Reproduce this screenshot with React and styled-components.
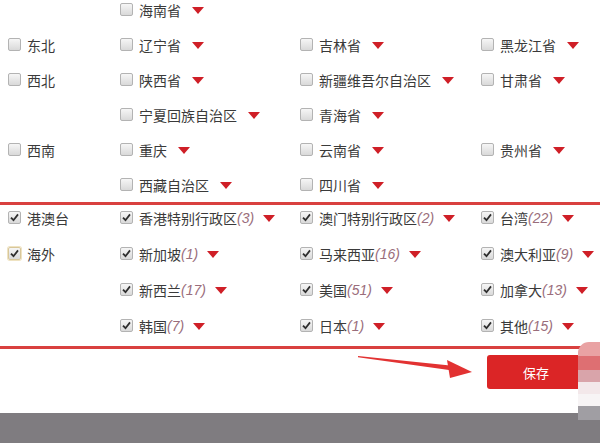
import React from "react";
import styled, { createGlobalStyle } from "styled-components";

const GlobalStyle = createGlobalStyle`
  html, body {
    margin: 0;
    padding: 0;
    background: #fff;
    overflow: hidden;
  }
  body {
    font-family: "Noto Sans CJK SC", "Noto Sans", sans-serif;
    color: #3a3a3a;
  }
`;

const Page = styled.div`
  position: relative;
  width: 600px;
  height: 443px;
  overflow: hidden;
  display: flex;
  flex-direction: column;
`;

const Section = styled.div`
  display: grid;
  grid-template-columns: 112px 180px 181px 1fr;
  grid-auto-rows: 26px;
  row-gap: ${({ gap }) => gap}px;
  padding-left: 8px;
  margin-top: ${({ top }) => top || 0}px;
  margin-bottom: ${({ bottom }) => bottom || 0}px;
`;

const Box = styled.div`
  border-top: 3px solid #d9403f;
  border-bottom: 3px solid #d9403f;
  padding-bottom: 7px;
`;

const Item = styled.div`
  display: flex;
  align-items: center;
  font-size: 14px;
  white-space: nowrap;
`;

const Box12 = styled.span`
  box-sizing: border-box;
  width: 13px;
  height: 13px;
  margin-right: 6px;
  border: 1px solid ${({ focus }) => (focus ? "#d8c79a" : "#b3b3b3")};
  border-radius: 2px;
  background: linear-gradient(#f6f6f6, #d9d9d9);
  display: flex;
  align-items: center;
  justify-content: center;
  flex-shrink: 0;
  box-shadow: ${({ focus }) => (focus ? "0 0 0 1px #efe3c2" : "none")};
  position: relative;
  top: -1px;
`;

const Count = styled.span`
  font-family: "Liberation Sans", Arial, sans-serif;
  font-style: italic;
  font-size: 14px;
  color: #9a6d7b;
`;

const Caret = styled.span`
  width: 0;
  height: 0;
  margin-left: ${({ gap }) => gap}px;
  border-left: 6px solid transparent;
  border-right: 6px solid transparent;
  border-top: 7px solid #cf1f27;
`;

const Footer = styled.div`
  display: flex;
  justify-content: flex-end;
  padding: 6px 15px 24px 0;
`;

const SaveButton = styled.button`
  width: 98px;
  height: 34px;
  border: none;
  border-radius: 3px;
  background: #db2526;
  color: #fff;
  font-family: "Noto Sans CJK SC", sans-serif;
  font-size: 13px;
  padding: 0;
`;

const BottomBar = styled.div`
  height: 30px;
  background: #7f7c80;
`;

const Arrow = styled.svg`
  position: absolute;
  left: 355px;
  top: 350px;
`;

const Mosaic = styled.div`
  position: absolute;
  right: 0;
  top: 342px;
  width: 22px;
  display: flex;
  flex-direction: column;
`;

const Tile = styled.div`
  height: ${({ h }) => h}px;
  background: ${({ c }) => c};
  border-radius: ${({ r }) => r || 0};
`;

const Check = ({ checked, focus }) => (
  <Box12 focus={focus}>
    {checked && (
      <svg width="9" height="9" viewBox="0 0 9 9">
        <path d="M1 4.6 L3.5 7.2 L8 1.4" fill="none" stroke="#2e2e2e" strokeWidth="1.8" />
      </svg>
    )}
  </Box12>
);

const Cell = ({ item, checked, caret, focus }) => {
  if (!item) return <div />;
  const [name, count] = Array.isArray(item) ? item : [item];
  return (
    <Item>
      <Check checked={checked} focus={focus} />
      <span>{name}</span>
      {count !== undefined && <Count>({count})</Count>}
      {caret && <Caret gap={count !== undefined ? 9 : 11} />}
    </Item>
  );
};

const domestic = [
  [null, "海南省", null, null],
  ["东北", "辽宁省", "吉林省", "黑龙江省"],
  ["西北", "陕西省", "新疆维吾尔自治区", "甘肃省"],
  [null, "宁夏回族自治区", "青海省", null],
  ["西南", "重庆", "云南省", "贵州省"],
  [null, "西藏自治区", "四川省", null],
];

const abroad = [
  ["港澳台", ["香港特别行政区", 3], ["澳门特别行政区", 2], ["台湾", 22]],
  ["海外", ["新加坡", 1], ["马来西亚", 16], ["澳大利亚", 9]],
  [null, ["新西兰", 17], ["美国", 51], ["加拿大", 13]],
  [null, ["韩国", 7], ["日本", 1], ["其他", 15]],
];

export default function App() {
  return (
    <Page>
      <GlobalStyle />
      <Section gap={9} top={-3} bottom={4}>
        {domestic.map((row, i) =>
          row.map((cell, j) => (
            <Cell key={`${i}-${j}`} item={cell} caret={j > 0} />
          ))
        )}
      </Section>
      <Box>
        <Section gap={10}>
          {abroad.map((row, i) =>
            row.map((cell, j) => (
              <Cell
                key={`${i}-${j}`}
                item={cell}
                checked
                caret={j > 0}
                focus={i === 1 && j === 0}
              />
            ))
          )}
        </Section>
      </Box>
      <Footer>
        <SaveButton>保存</SaveButton>
      </Footer>
      <BottomBar />
      <Arrow width="122" height="32" viewBox="0 0 122 32">
        <polygon points="3,6 95,15.5 94,20 3,7.2" fill="#e23232" />
        <polygon points="92,10 117,22 95,28" fill="#e23232" />
      </Arrow>
      <Mosaic>
        <Tile h={14} c="#e9a2a3" r="11px 0 0 0" />
        <Tile h={14} c="#de6f72" />
        <Tile h={12} c="#d9a4aa" />
        <Tile h={12} c="#f3e8ea" />
        <Tile h={12} c="#f7f4f5" />
        <Tile h={14} c="#a09ea3" />
      </Mosaic>
    </Page>
  );
}
